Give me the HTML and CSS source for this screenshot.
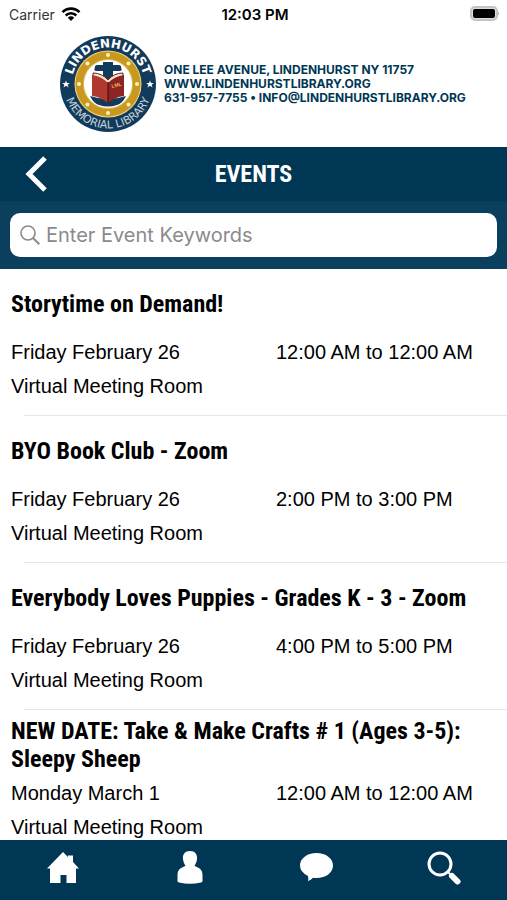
FILE: index.html
```html
<!DOCTYPE html>
<html lang="en">
<head>
    <meta charset="UTF-8">
    <meta name="viewport" content="width=device-width, initial-scale=1.0">
    <title>Events - Lindenhurst Memorial Library</title>
    <link rel="stylesheet" href="styles.css">
</head>
<body>
    <div class="status-bar">
        <div class="carrier">
            <span>Carrier</span>
            <svg width="20" height="14" viewBox="0 0 20 14" aria-hidden="true">
                <g fill="none" stroke="#000" stroke-width="2.6">
                    <path d="M1.5 5.2a12 12 0 0 1 17 0"/>
                    <path d="M4.7 8.5a7.5 7.5 0 0 1 10.6 0"/>
                </g>
                <path d="M10 14l-3.2-3.3a4.5 4.5 0 0 1 6.4 0z"/>
            </svg>
        </div>
        <div class="clock">12:03 PM</div>
        <svg class="battery" width="31" height="16" viewBox="0 0 31 16" aria-hidden="true">
            <rect x="1" y="1" width="26" height="13" rx="4" fill="#ddd" stroke="#c4c4c4" stroke-width="2"/>
            <rect x="3" y="3" width="22" height="9" rx="2"/>
            <path d="M28 5.5q2.5 2 0 4z" fill="#b9b9b9"/>
        </svg>
    </div>

    <header class="library">
        <svg class="logo" width="98" height="98" viewBox="0 0 98 98" role="img" aria-label="Lindenhurst Memorial Library">
            <defs>
                <path id="arcTop" d="M12.5 49a36.5 36.5 0 0 1 73 0"/>
                <path id="arcBottom" d="M4.5 49a44.5 44.5 0 0 0 89 0"/>
            </defs>
            <circle cx="49" cy="49" r="48" fill="#123a5b"/>
            <circle cx="49" cy="49" r="33.5" fill="#f0d48a"/>
            <circle cx="49" cy="49" r="32.5" fill="#c9991f"/>
            <circle cx="49" cy="49" r="25" fill="#e0bd62"/>
            <circle cx="49" cy="49" r="24" fill="#fff"/>
            <g fill="#fff3bd">
                <circle cx="49" cy="20" r="2"/>
                <circle cx="69.5" cy="28.5" r="2"/>
                <circle cx="78" cy="49" r="2"/>
                <circle cx="69.5" cy="69.5" r="2"/>
                <circle cx="49" cy="78" r="2"/>
                <circle cx="28.5" cy="69.5" r="2"/>
                <circle cx="20" cy="49" r="2"/>
                <circle cx="28.5" cy="28.5" r="2"/>
            </g>
            <!-- ship behind the book -->
            <path d="M44 27h10v3h6q3 1 2 3 2 2-1 3H37q-3-1-1-3-1-2 2-3h6zM44 36h10v9H44zM31 61q9 3 18 3t18-3q-4 8-9 9-9 3-18 0-5-1-9-9z" fill="#123a5b"/>
            <!-- open book -->
            <path d="M34 38q9 0 15 7 6-7 15-7v5q-9 0-15 8-6-8-15-8z" fill="#f1e4c8" stroke="#6e1c1b" stroke-width="1"/>
            <path d="M33 40q9 1 16 8v20q-7-6-16-7z" fill="#b0392f"/>
            <path d="M65 40q-9 1-16 8v20q7-6 16-7z" fill="#8d2422"/>
            <path d="M49 47v21" stroke="#5e1719" stroke-width="1.5"/>
            <text x="53" y="53" class="book-text" transform="rotate(-14 53 53)">LML</text>
            <g fill="#fff">
                <path id="star" d="M7 45.500l1 2.500h2.800l-2.200 1.700.9 2.700-2.500-1.600-2.500 1.600.9-2.700-2.200-1.700H6z"/>
                <use href="#star" x="84"/>
            </g>
            <text class="ring ring-top"><textPath href="#arcTop" startOffset="50%">LINDENHURST</textPath></text>
            <text class="ring ring-bottom"><textPath href="#arcBottom" startOffset="50%">MEMORIAL LIBRARY</textPath></text>
        </svg>
        <address>
            ONE LEE AVENUE, LINDENHURST NY 11757<br>
            WWW.LINDENHURSTLIBRARY.ORG<br>
            631-957-7755 • INFO@LINDENHURSTLIBRARY.ORG
        </address>
    </header>

    <div class="title-bar">
        <button class="back" type="button" aria-label="Back">
            <svg width="24" height="36" viewBox="0 0 24 36"><path d="M21 2L5 18l16 16" fill="none" stroke="#fff" stroke-width="5"/></svg>
        </button>
        <h1>EVENTS</h1>
    </div>

    <form class="search" role="search">
        <label class="search-box">
            <svg width="20" height="20" viewBox="0 0 20 20" aria-hidden="true">
                <circle cx="8" cy="8" r="7" fill="none" stroke="#8a8a8e" stroke-width="1.6"/>
                <path d="M13 13l6.3 6.3" stroke="#8a8a8e" stroke-width="2"/>
            </svg>
            <input type="text" placeholder="Enter Event Keywords" aria-label="Enter Event Keywords">
        </label>
    </form>

    <main class="events">
        <article class="event">
            <h2>Storytime on Demand!</h2>
            <div class="when"><span>Friday February 26</span><span>12:00 AM to 12:00 AM</span></div>
            <p>Virtual Meeting Room</p>
        </article>
        <article class="event">
            <h2>BYO Book Club - Zoom</h2>
            <div class="when"><span>Friday February 26</span><span>2:00 PM to 3:00 PM</span></div>
            <p>Virtual Meeting Room</p>
        </article>
        <article class="event">
            <h2>Everybody Loves Puppies - Grades K - 3 - Zoom</h2>
            <div class="when"><span>Friday February 26</span><span>4:00 PM to 5:00 PM</span></div>
            <p>Virtual Meeting Room</p>
        </article>
        <article class="event">
            <h2>NEW DATE: Take &amp; Make Crafts # 1 (Ages 3-5): Sleepy Sheep</h2>
            <div class="when"><span>Monday March 1</span><span>12:00 AM to 12:00 AM</span></div>
            <p>Virtual Meeting Room</p>
        </article>
    </main>

    <nav class="tab-bar">
        <a href="#home" aria-label="Home">
            <svg width="34" height="34" viewBox="0 0 34 34"><path d="M17 1l5 5V4.500h5V11l6 6.500h-3V32h-9.500v-8h-6v8H4V17.500H1z" fill="#fff"/></svg>
        </a>
        <a href="#account" aria-label="Account">
            <svg width="34" height="34" viewBox="0 0 34 34"><path d="M17 0c5 0 7.500 3.500 7 8-.3 3.500-1.500 5-2.500 7 4 1.500 8 3 8 9v6q0 1-1.500 1.500-11 2.500-22 0-1.500-.5-1.500-1.500v-6c0-6 4-7.500 8-9-1-2-2.200-3.500-2.500-7-.5-4.500 2-8 7-8z" fill="#fff"/></svg>
        </a>
        <a href="#messages" aria-label="Messages">
            <svg width="34" height="34" viewBox="0 0 34 34"><path d="M16.500 2C26 2 33 7.500 33 14.500S26 27 16.500 27q-2 0-3.500-.3Q11 29 8 30q.5-2.500 0-5Q0 21 0 14.500C0 7.500 7 2 16.500 2z" fill="#fff"/></svg>
        </a>
        <a href="#search" aria-label="Search">
            <svg width="34" height="34" viewBox="0 0 34 34">
                <circle cx="13" cy="13" r="11" fill="none" stroke="#fff" stroke-width="3"/>
                <path d="M21 21l3 3" stroke="#fff" stroke-width="2"/>
                <path d="M25 25l5.500 5.500" stroke="#fff" stroke-width="6" stroke-linecap="round"/>
            </svg>
        </a>
    </nav>
</body>
</html>
```
FILE: styles.css
```css
:root {
    --navy: #003755;
    --navy-light: #0a3f5e;
    --line: #e6e6e6;
    --placeholder: #8a8a8e;
    --narrow: "Roboto Condensed", Roboto, sans-serif;
}

* {
    box-sizing: border-box;
    margin: 0;
    padding: 0;
}

body {
    display: flex;
    flex-direction: column;
    height: 100vh;
    font-family: "Liberation Sans", Arial, sans-serif;
    font-size: 20px;
    color: #000;
    background: #fff;
}

.status-bar {
    display: grid;
    grid-template-columns: 1fr auto 1fr;
    align-items: center;
    height: 28px;
    padding: 0 6px 0 9px;
    font-family: Inter, sans-serif;
    font-size: 14px;
}

.carrier {
    display: flex;
    align-items: center;
    gap: 6px;
    color: #333;
}

.clock {
    font-size: 15px;
    font-weight: 600;
}

.battery {
    justify-self: end;
}

.library {
    display: flex;
    align-items: center;
    gap: 7px;
    height: 119px;
    padding: 0 0 8px 59px;
}

.logo {
    flex: none;
    overflow: visible;
}

.ring {
    font-family: "DejaVu Sans", sans-serif;
    fill: #fff;
    text-anchor: middle;
}

.ring-top {
    font-size: 12px;
    font-weight: bold;
}

.ring-bottom {
    font-size: 11px;
    fill: #c5d2dc;
}

.book-text {
    font: bold 5px "Liberation Sans", sans-serif;
    fill: #e8b96a;
}

address {
    font: bold 12px/14px Inter, sans-serif;
    color: var(--navy);
    white-space: nowrap;
}

.title-bar {
    display: grid;
    grid-template-columns: 72px 1fr 72px;
    align-items: center;
    height: 54px;
    background: var(--navy);
    color: #fff;
}

.back {
    display: flex;
    justify-content: center;
    background: none;
    border: none;
    cursor: pointer;
}

h1 {
    font: bold 24px/28px var(--narrow);
    text-align: center;
}

.search {
    padding: 12px 10px;
    background: var(--navy-light);
}

.search-box {
    display: flex;
    align-items: center;
    gap: 6px;
    height: 44px;
    padding: 0 10px;
    border-radius: 10px;
    background: #fff;
}

.search-box input {
    flex: 1;
    min-width: 0;
    border: none;
    outline: none;
    background: none;
    font: 20px Inter, sans-serif;
}

.search-box input::placeholder {
    color: var(--placeholder);
    opacity: 1;
}

.events {
    flex: 1;
    min-height: 0;
    overflow-y: auto;
    scrollbar-width: none;
}

.event {
    padding: 0 11px 12px;
    line-height: 34px;
    border-bottom: 1px solid;
    border-image: linear-gradient(to right, transparent 25px, var(--line) 25px) 1;
}

.event h2 {
    display: flex;
    align-items: center;
    min-height: 66px;
    padding-top: 4px;
    font: bold 24px/28px var(--narrow);
}

.when {
    display: grid;
    grid-template-columns: 265px 1fr;
}

.tab-bar {
    display: grid;
    grid-template-columns: repeat(4, 1fr);
    height: 60px;
    background: var(--navy);
}

.tab-bar a {
    display: flex;
    align-items: center;
    justify-content: center;
    padding-bottom: 4px;
}
```
